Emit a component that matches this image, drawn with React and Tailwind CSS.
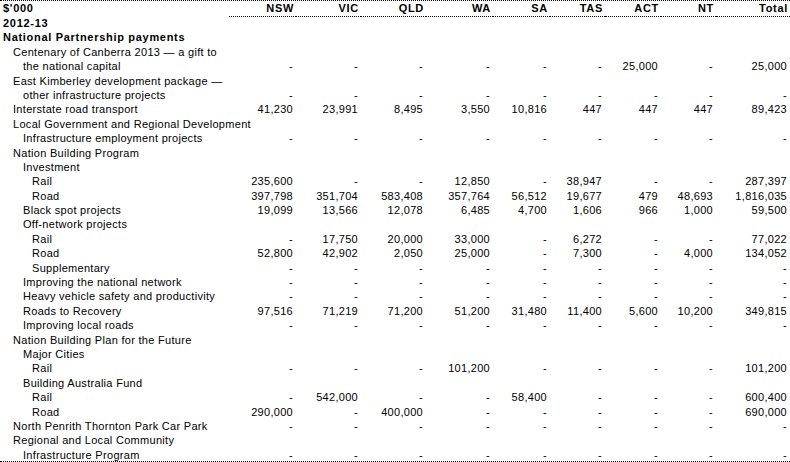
import React from 'react';

const cols = ['NSW', 'VIC', 'QLD', 'WA', 'SA', 'TAS', 'ACT', 'NT', 'Total'];
const none = ['-', '-', '-', '-', '-', '-', '-', '-', '-'];

// [label, indent level, bold, values]
const rows = [
  ['2012-13', 0, true],
  ['National Partnership payments', 0, true],
  ['Centenary of Canberra 2013 \u2014 a gift to', 1],
  ['the national capital', 2, false, ['-', '-', '-', '-', '-', '-', '25,000', '-', '25,000']],
  ['East Kimberley development package \u2014', 1],
  ['other infrastructure projects', 2, false, none],
  ['Interstate road transport', 1, false, ['41,230', '23,991', '8,495', '3,550', '10,816', '447', '447', '447', '89,423']],
  ['Local Government and Regional Development', 1],
  ['Infrastructure employment projects', 2, false, none],
  ['Nation Building Program', 1],
  ['Investment', 2],
  ['Rail', 3, false, ['235,600', '-', '-', '12,850', '-', '38,947', '-', '-', '287,397']],
  ['Road', 3, false, ['397,798', '351,704', '583,408', '357,764', '56,512', '19,677', '479', '48,693', '1,816,035']],
  ['Black spot projects', 2, false, ['19,099', '13,566', '12,078', '6,485', '4,700', '1,606', '966', '1,000', '59,500']],
  ['Off-network projects', 2],
  ['Rail', 3, false, ['-', '17,750', '20,000', '33,000', '-', '6,272', '-', '-', '77,022']],
  ['Road', 3, false, ['52,800', '42,902', '2,050', '25,000', '-', '7,300', '-', '4,000', '134,052']],
  ['Supplementary', 3, false, none],
  ['Improving the national network', 2, false, none],
  ['Heavy vehicle safety and productivity', 2, false, none],
  ['Roads to Recovery', 2, false, ['97,516', '71,219', '71,200', '51,200', '31,480', '11,400', '5,600', '10,200', '349,815']],
  ['Improving local roads', 2, false, none],
  ['Nation Building Plan for the Future', 1],
  ['Major Cities', 2],
  ['Rail', 3, false, ['-', '-', '-', '101,200', '-', '-', '-', '-', '101,200']],
  ['Building Australia Fund', 2],
  ['Rail', 3, false, ['-', '542,000', '-', '-', '58,400', '-', '-', '-', '600,400']],
  ['Road', 3, false, ['290,000', '-', '400,000', '-', '-', '-', '-', '-', '690,000']],
  ['North Penrith Thornton Park Car Park', 1, false, none],
  ['Regional and Local Community', 1],
  ['Infrastructure Program', 2, false, none],
];

const indents = ['pl-[3px]', 'pl-[13px]', 'pl-[23px]', 'pl-[32px]'];
const grid = 'grid grid-cols-[229px_67px_65px_65px_67px_57px_55px_56px_55px_74px]';

export default function App() {
  return (
    <div
      className="w-[790px] h-[462px] overflow-hidden bg-white text-black text-[11px] tracking-[0.3px]"
      style={{ fontFamily: '"Liberation Sans", Arial, sans-serif' }}
    >
      <div className={`${grid} border-t border-dotted border-black font-bold tracking-[0.7px] h-[15px] leading-[14.5px]`}>
        <div className="pl-[3px] border-b border-transparent">$'000</div>
        {cols.map((c) => (
          <div key={c} className="text-right pr-[2px] border-b border-dotted border-black">
            {c}
          </div>
        ))}
      </div>

      <div className="border-b border-dotted border-black">
        {rows.map(([label, level, bold, values], i) => (
          <div
            key={i}
            className={`${grid} h-[14.4px] leading-[16.2px] ${bold ? 'font-bold tracking-[0.7px]' : ''}`}
          >
            <div className={`${indents[level]} whitespace-nowrap`}>{label}</div>
            {(values || []).map((v, j) => (
              <div key={j} className="text-right pr-[3px] whitespace-nowrap">
                {v}
              </div>
            ))}
          </div>
        ))}
      </div>
    </div>
  );
}
